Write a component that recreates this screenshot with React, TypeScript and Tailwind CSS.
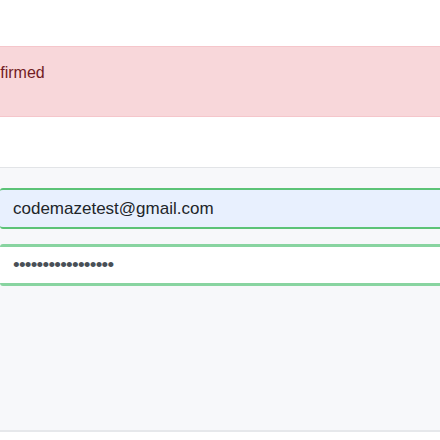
export default function App() {
  return (
    <div className="relative w-[440px] h-[440px] overflow-hidden bg-white" style={{ fontFamily: '"Liberation Sans", Arial, sans-serif' }}>
      <div className="h-[46px]" />
      <div className="h-[71px] bg-[#f8d7da] border-y border-[#f5c6cb] pt-[14px] text-[16px] leading-6 text-[#721c24] whitespace-nowrap overflow-hidden">
        <span className="block -ml-[70px]">Email confirmed</span>
      </div>
      <div className="h-[50px]" />
      <div className="h-[265px] bg-[#f7f8fa] border-t border-[#e2e4e7] border-b-2 border-b-[#e6e8eb] pt-[20px] flex flex-col gap-[15px] overflow-hidden">
        <div className="h-[41px] w-[460px] shrink-0 rounded-l-[3px] bg-[#e8f0fe] border-y-2 border-y-[#5cc377] pl-[13px] flex items-center text-[17px] text-[#212529]">
          codemazetest@gmail.com
        </div>
        <div className="h-[42px] w-[460px] shrink-0 rounded-l-[3px] bg-white border-y-[3px] border-y-[#88d4a0] pl-[13px] pt-[1px] flex items-center text-[19px] tracking-[-0.75px] text-[#495057]">
          •••••••••••••••••
        </div>
      </div>
    </div>
  );
}
